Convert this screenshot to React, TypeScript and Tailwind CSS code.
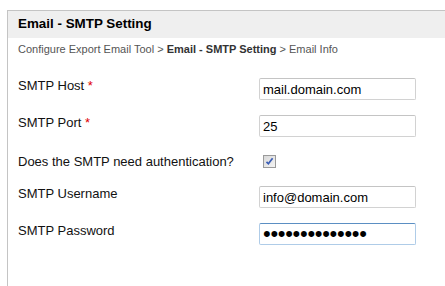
import React from "react";

type Field = {
  label: string;
  required?: boolean;
  value: string;
  password?: boolean;
};

const inputBase =
  "h-[22px] w-[157px] rounded-[2px] border px-[3px] text-[13px] text-black outline-none bg-white";

const FieldRow: React.FC<{ field: Field }> = ({ field }) => (
  <div className="flex items-start h-[22px]">
    <label className="w-[241px] leading-4 text-[13px] text-[#111]">
      {field.label}
      {field.required && <span className="text-[#e00000]"> *</span>}
    </label>
    {field.password ? (
      <div
        className={`${inputBase} flex items-center border-[#afcce8] border-t-[#5b8fc3]`}
      >
        <span className="text-[22px] tracking-[-0.3px] leading-[18px]">{field.value}</span>
      </div>
    ) : (
      <input
        readOnly
        value={field.value}
        className={`${inputBase} border-[#d2d2d2] border-t-[#c4c4c4]`}
      />
    )}
  </div>
);

const App: React.FC = () => {
  return (
    <div
      className="h-[286px] w-[445px] overflow-hidden bg-white pt-[10px] pl-[7px]"
      style={{ fontFamily: '"Liberation Sans", Arial, sans-serif' }}
    >
      <div className="h-full w-[460px] border-l border-t border-[#c4c4c4]">
        <div className="flex h-[27px] items-center bg-[#efefef] pl-[10px]">
          <h1 className="text-[13.4px] font-bold text-black">Email - SMTP Setting</h1>
        </div>

        <div className="pl-[10px] pt-[4px] text-[11px] leading-[14px] text-[#555]">
          Configure Export Email Tool &gt;{" "}
          <span className="font-bold text-[#333]">Email - SMTP Setting</span> &gt; Email Info
        </div>

        <div className="mt-[22px] flex flex-col gap-[15px] pl-[10px]">
          <FieldRow field={{ label: "SMTP Host", required: true, value: "mail.domain.com" }} />
          <FieldRow field={{ label: "SMTP Port", required: true, value: "25" }} />

          <div className="flex h-[19px] items-center">
            <span className="w-[245px] text-[13px] leading-4 text-[#111]">
              Does the SMTP need authentication?
            </span>
            <span className="flex h-[13px] w-[13px] items-center justify-center border border-[#9a9a9a] bg-gradient-to-br from-[#d9d9d9] to-[#f4f4f4]">
              <svg width="9" height="9" viewBox="0 0 9 9">
                <path
                  d="M1.5 4.8 L3.4 6.8 L7.6 1.2"
                  fill="none"
                  stroke="#3a5db5"
                  strokeWidth="1.7"
                />
              </svg>
            </span>
          </div>

          <FieldRow field={{ label: "SMTP Username", value: "info@domain.com" }} />
          <FieldRow field={{ label: "SMTP Password", value: "••••••••••••••", password: true }} />
        </div>
      </div>
    </div>
  );
};

export default App;
